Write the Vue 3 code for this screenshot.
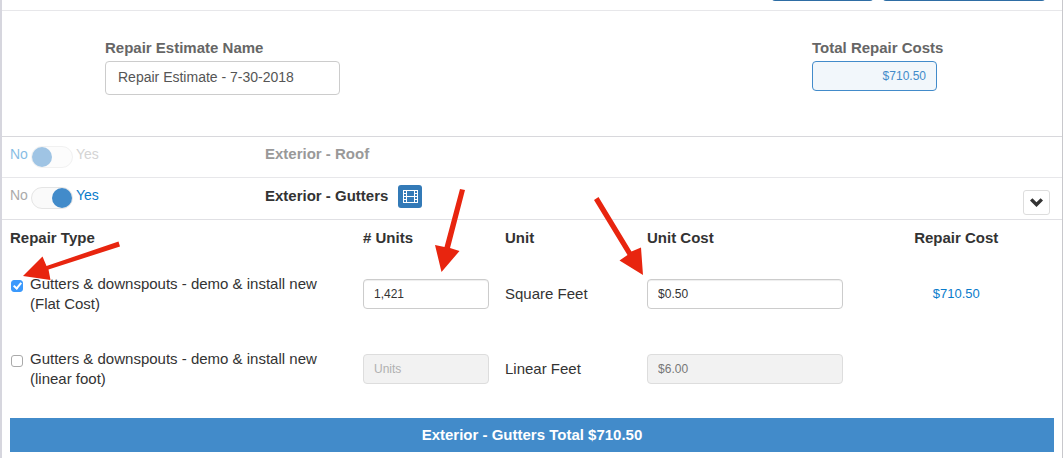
<template>
  <div class="page">
    <header class="toolbar">
      <button type="button" class="btn-save" aria-label="Save"></button>
      <button type="button" class="btn-report" aria-label="Report"></button>
    </header>

    <section class="summary">
      <div>
        <label class="summary-label" for="estimate-name">Repair Estimate Name</label>
        <input id="estimate-name" v-model="estimateName" class="name-input" type="text" />
      </div>
      <div>
        <label class="summary-label" for="total-costs">Total Repair Costs</label>
        <input id="total-costs" class="total-input" type="text" :value="money(total)" readonly />
      </div>
    </section>

    <section v-for="s in sections" :key="s.name" class="section-row" :class="{ off: !s.on }">
      <label class="switch">
        <span class="no">No</span>
        <input v-model="s.on" type="checkbox" role="switch" :aria-label="s.name" />
        <span class="yes">Yes</span>
      </label>
      <h2 class="section-title">{{ s.name }}</h2>
      <button v-if="s.on" type="button" class="btn-film" aria-label="Video">
        <svg width="15" height="13" viewBox="0 0 15 13" shape-rendering="crispEdges">
          <path fill="#fff" fill-rule="evenodd" d="M0 0H15V13H0ZM1 1V3H3V1ZM1 4V6H3V4ZM1 7V9H3V7ZM1 10V12H3V10ZM12 1V3H14V1ZM12 4V6H14V4ZM12 7V9H14V7ZM12 10V12H14V10ZM4 1V6H11V1ZM4 7V12H11V7Z" />
        </svg>
      </button>
      <button v-if="s.on" type="button" class="btn-collapse" aria-label="Collapse">
        <svg width="13" height="9" viewBox="0 0 13 9">
          <path fill="#333" d="M0 2.6 2.4 .3 6.5 4.3 10.6 .3 13 2.6 6.5 9Z" />
        </svg>
      </button>
    </section>

    <table class="repairs">
      <thead>
        <tr>
          <th class="col-type">Repair Type</th>
          <th class="col-unit"># Units</th>
          <th class="col-unit">Unit</th>
          <th class="col-cost">Unit Cost</th>
          <th class="col-cost center">Repair Cost</th>
        </tr>
      </thead>
      <tbody>
        <tr v-for="r in repairs" :key="r.id">
          <td>
            <label class="type">
              <input v-model="r.checked" class="tick" type="checkbox" />
              <span>Gutters &amp; downspouts - demo &amp; install new<br />({{ r.basis }})</span>
            </label>
          </td>
          <td>
            <input v-model="r.units" class="field" type="text" placeholder="Units" aria-label="Units" :disabled="!r.checked" />
          </td>
          <td>{{ r.unit }}</td>
          <td>
            <input v-model="r.cost" class="field" type="text" aria-label="Unit Cost" :disabled="!r.checked" />
          </td>
          <td class="center amount">{{ r.checked ? money(rowCost(r)) : '' }}</td>
        </tr>
      </tbody>
    </table>

    <div class="section-total">Exterior - Gutters Total {{ money(total) }}</div>

    <!-- help arrows -->
    <svg class="arrows" width="1063" height="458" viewBox="0 0 1063 458" fill="#e8250f" aria-hidden="true">
      <path d="M118.500 241.500 120 246.500 48.500 269.500 50.500 280 23 276 42.500 256.500 46.500 266 Z" />
      <path d="M460 189 465 190 450 248 459.500 251 441.500 272 435 245 444.500 247 Z" />
      <path d="M594 200 598.500 197 631.500 251.500 641 247.500 643 275 619.500 260.500 627.500 255 Z" />
    </svg>
  </div>
</template>

<script setup>
import { ref, computed } from 'vue';

const estimateName = ref('Repair Estimate - 7-30-2018');
const sections = ref([
  { name: 'Exterior - Roof', on: false },
  { name: 'Exterior - Gutters', on: true },
]);
const repairs = ref([
  { id: 1, basis: 'Flat Cost', checked: true, units: '1,421', unit: 'Square Feet', cost: '$0.50' },
  { id: 2, basis: 'linear foot', checked: false, units: '', unit: 'Linear Feet', cost: '$6.00' },
]);

const toNumber = (v) => Number(v.replace(/[$,]/g, '')) || 0;
const rowCost = (r) => toNumber(r.units) * toNumber(r.cost);
const money = (n) => '$' + n.toFixed(2);
const total = computed(() => repairs.value.filter((r) => r.checked).reduce((sum, r) => sum + rowCost(r), 0));
</script>

<style>
body { margin:0; background:#fff; }
</style>

<style scoped>
* { box-sizing:border-box; }
.page { position:relative; min-height:100vh; overflow:hidden; border-left:2px solid #d6d6de; border-right:1px solid #c8c8cc; color:#333; font:15px/20px "Liberation Sans", Arial, sans-serif; }
input, button { font-family:inherit; margin:0; }
button { display:flex; align-items:center; justify-content:center; padding:0; cursor:pointer; }

.toolbar { display:flex; justify-content:flex-end; align-items:flex-end; gap:8px; height:11px; padding:0 16px 9px 0; overflow:hidden; border-bottom:1px solid #e7e7ea; }
.toolbar button { flex:none; height:34px; background:#337ab7; border:1px solid #2e6da4; border-radius:4px; }
.btn-save { width:103px; }
.btn-report { width:164px; }

.summary { display:grid; grid-template-columns:1fr 132px; padding:27px 118px 41px 103px; }
.summary-label { display:block; margin-bottom:3px; color:#666; font-weight:bold; white-space:nowrap; }
.name-input { display:block; width:235px; height:34px; padding:0 12px 2px; border:1px solid #ccc; border-radius:4px; color:#555; font-size:14px; }
.total-input { display:block; width:125px; height:30px; padding:0 10px; border:1px solid #428bca; border-radius:4px; background:#f2f7fb; color:#428bca; font-size:12px; text-align:right; }

.section-row { display:flex; align-items:flex-start; height:41px; padding:7px 12px 0 8px; border-top:1px solid #e7e7ea; }
.summary + .section-row { border-top-color:#d8d8dc; }
.section-row:not(.off) { height:42px; }
.switch { display:flex; width:255px; font-size:14px; }
.switch .no { width:21px; color:#aaa; }
.switch .yes { color:#0a7ccb; }
.switch input { appearance:none; width:42px; height:22px; margin:2px 3px 0 0; border:1px solid #e5e5e5; border-radius:11px; background:#fafafa; }
.switch input::before { content:""; display:block; width:20px; height:20px; border-radius:50%; background:#428bca; }
.switch input:checked::before { margin-left:20px; }
.off .switch { opacity:.5; }
.off .switch .no { color:#0a7ccb; }
.off .switch .yes { color:#aaa; }
.section-title { margin:0; font-size:15px; line-height:20px; }
.section-row:not(.off) .section-title { margin-top:1px; }
.off .section-title { color:#999; }
.btn-film { width:24px; height:23px; margin-left:10px; border:0; border-radius:3px; background:#337ab7; }
.btn-collapse { width:27px; height:25px; margin:5px 0 0 auto; border:1px solid #ddd; border-radius:3px; background:#fff; }

.repairs { width:100%; table-layout:fixed; border-collapse:separate; border-spacing:0; border-top:1px solid #e0e0e4; }
.repairs th { height:36px; padding:0 8px; text-align:left; }
.repairs td { height:75px; padding:0 8px; vertical-align:middle; }
.col-type { width:33.3%; }
.col-unit { width:13.4%; }
.repairs .center { text-align:center; }
.repairs .amount { color:#0a7ccb; font-size:13px; }
.type { display:flex; gap:7px; }
.tick { appearance:none; flex:none; display:flex; align-items:center; justify-content:center; width:12px; height:12px; margin:6px 0 0 1px; border:1px solid #aaa; border-radius:3px; background:#fff; }
.tick:checked { border-color:#3b99fc; background:#3b99fc; }
.tick:checked::before { content:""; width:3px; height:6px; margin-bottom:2px; border:solid #fff; border-width:0 2px 2px 0; box-sizing:content-box; transform:rotate(40deg); }
.field { display:block; width:100%; height:30px; padding:0 10px; border:1px solid #ccc; border-radius:4px; background:#fff; color:#333; font-size:12px; box-shadow:inset 0 1px 1px rgba(0,0,0,.07); }
.field:disabled { border-color:#ddd; background:#f2f2f2; color:#777; box-shadow:none; }
.field::placeholder { color:#b0b0b0; opacity:1; }

.section-total { margin:12px 8px 6px; background:#428bca; color:#fff; font-weight:bold; line-height:34px; text-align:center; }

.arrows { position:absolute; top:0; left:-2px; pointer-events:none; }
</style>
